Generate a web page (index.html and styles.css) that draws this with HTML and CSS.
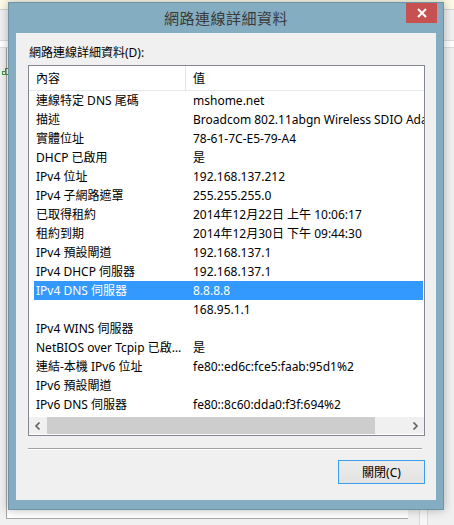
FILE: index.html
```html
<!DOCTYPE html>
<html lang="zh-Hant">
<head>
    <meta charset="UTF-8">
    <meta name="viewport" content="width=device-width, initial-scale=1.0">
    <title>網路連線詳細資料</title>
    <link rel="stylesheet" href="styles.css">
</head>
<body>
    <div class="desk">
        <div class="bg-top"></div>
        <div class="bg-toolbar"></div>
        <div class="bg-strip"></div>
        <div class="bg-main">
            <div class="bg-panel">
                <svg class="bg-icon" width="8" height="8" viewBox="0 0 8 8">
                    <rect x="0.5" y="4.5" width="3" height="3" fill="none" stroke="#3a9a3a"/>
                    <rect x="3.5" y="1.5" width="3" height="6" fill="none" stroke="#3a9a3a"/>
                </svg>
            </div>
            <div class="bg-side"></div>
        </div>
    </div>

    <div class="dialog">
        <div class="titlebar">
            <span class="title">網路連線詳細資料</span>
            <div class="close">
                <svg width="10" height="10" viewBox="0 0 10 10">
                    <path d="M1 1 L9 9 M9 1 L1 9" stroke="#fff" stroke-width="2" fill="none"/>
                </svg>
            </div>
        </div>

        <div class="client">
            <div class="caption">網路連線詳細資料(D):</div>

            <div class="listview">
                <div class="lv-head">
                    <div class="head-cell first">內容</div>
                    <div class="head-cell">值</div>
                </div>
                <div class="lv-body">
                    <div class="row"><div class="cell name">連線特定 DNS 尾碼</div><div class="cell">mshome.net</div></div>
                    <div class="row"><div class="cell name">描述</div><div class="cell">Broadcom 802.11abgn Wireless SDIO Adapter</div></div>
                    <div class="row"><div class="cell name">實體位址</div><div class="cell">78-61-7C-E5-79-A4</div></div>
                    <div class="row"><div class="cell name">DHCP 已啟用</div><div class="cell">是</div></div>
                    <div class="row"><div class="cell name">IPv4 位址</div><div class="cell">192.168.137.212</div></div>
                    <div class="row"><div class="cell name">IPv4 子網路遮罩</div><div class="cell">255.255.255.0</div></div>
                    <div class="row"><div class="cell name">已取得租約</div><div class="cell">2014年12月22日 上午 10:06:17</div></div>
                    <div class="row"><div class="cell name">租約到期</div><div class="cell">2014年12月30日 下午 09:44:30</div></div>
                    <div class="row"><div class="cell name">IPv4 預設閘道</div><div class="cell">192.168.137.1</div></div>
                    <div class="row"><div class="cell name">IPv4 DHCP 伺服器</div><div class="cell">192.168.137.1</div></div>
                    <div class="row selected"><div class="cell name">IPv4 DNS 伺服器</div><div class="cell">8.8.8.8</div></div>
                    <div class="row"><div class="cell name"></div><div class="cell">168.95.1.1</div></div>
                    <div class="row"><div class="cell name">IPv4 WINS 伺服器</div><div class="cell"></div></div>
                    <div class="row"><div class="cell name">NetBIOS over Tcpip 已啟用</div><div class="cell">是</div></div>
                    <div class="row"><div class="cell name">連結-本機 IPv6 位址</div><div class="cell">fe80::ed6c:fce5:faab:95d1%2</div></div>
                    <div class="row"><div class="cell name">IPv6 預設閘道</div><div class="cell"></div></div>
                    <div class="row"><div class="cell name">IPv6 DNS 伺服器</div><div class="cell">fe80::8c60:dda0:f3f:694%2</div></div>
                </div>
                <div class="hscroll">
                    <div class="arrow">
                        <svg width="8" height="8" viewBox="0 0 8 8"><path d="M5.5 0.5 L2 4 L5.5 7.5" stroke="#606060" stroke-width="1.6" fill="none"/></svg>
                    </div>
                    <div class="thumb"></div>
                    <div class="track"></div>
                    <div class="arrow">
                        <svg width="8" height="8" viewBox="0 0 8 8"><path d="M2.5 0.5 L6 4 L2.5 7.5" stroke="#606060" stroke-width="1.6" fill="none"/></svg>
                    </div>
                </div>
            </div>

            <div class="separator"></div>

            <div class="actions">
                <button class="btn">關閉(C)</button>
            </div>
        </div>
    </div>
</body>
</html>
```

FILE: styles.css
```css
body {
    margin: 0;
    width: 454px;
    height: 525px;
    overflow: hidden;
    background: #f0f0f0;
    font-family: "Noto Sans", "Noto Sans CJK TC", sans-serif;
    font-size: 12px;
    color: #000;
}

/* window behind the dialog */
.desk {
    display: flex;
    flex-direction: column;
    height: 525px;
}

.bg-top {
    height: 9px;
    background: #fcfae6; /* pale yellow info bar */
    border-bottom: 1px solid #d4d4d4;
}

.bg-toolbar {
    height: 30px;
    background: #f0f0f0;
}

.bg-strip {
    height: 6px;
    background: #fff;
    border-top: 1px solid #dcdcdc;
    border-bottom: 1px solid #dcdcdc;
}

.bg-main {
    display: flex;
    height: 477px;
}

.bg-panel {
    width: 401px;
    height: 470px;
    margin-left: 6px;
    background: #fff;
    border-left: 1px solid #a9a9a9;
    border-bottom: 1px solid #a9a9a9;
}

.bg-icon {
    display: block;
    margin: 19px 0 0 -5px;
}

.bg-side {
    width: 7px;
    margin-left: 11px;
    border-left: 1px solid #dadada;
    border-right: 1px solid #dadada;
    background: #f7f7f7;
}

/* the dialog window */
.dialog {
    position: absolute;
    left: 8px;
    top: 2px;
    width: 436px;
    height: 508px;
    box-sizing: border-box;
    display: flex;
    flex-direction: column;
    padding: 0 7px 9px 7px;
    background: #85adc1; /* window frame */
    border: 1px solid #6d93a6;
    box-shadow: 0 0 9px rgba(0, 0, 0, 0.28);
}

.titlebar {
    height: 30px;
    margin: 0 -7px;
    position: relative;
    display: flex;
    justify-content: center;
}

.title {
    font-family: "Noto Sans CJK TC", sans-serif;
    font-size: 15px;
    line-height: 30px;
    color: #3a3a3a;
    letter-spacing: 0.5px;
}

.close {
    position: absolute;
    top: 0;
    right: 6px;
    width: 31px;
    height: 20px;
    background: #c75050;
    display: flex;
    align-items: center;
    justify-content: center;
}

.client {
    flex: 1;
    background: #f0f0f0;
    display: flex;
    flex-direction: column;
}

.caption {
    padding: 12px 0 0 13px;
    line-height: 16px;
}

/* list view */
.listview {
    margin: 4px 0 0 12px;
    width: 397px;
    height: 371px;
    box-sizing: border-box;
    border: 1px solid #828790;
    background: #fff;
    display: flex;
    flex-direction: column;
}

.lv-head {
    display: flex;
    height: 24px;
    border-bottom: 1px solid #e2e8ee;
}

.head-cell {
    padding: 2px 0 0 7px;
    line-height: 22px;
}

.head-cell.first {
    width: 149px;
    border-right: 1px solid #e5e5e5;
}

.lv-body {
    height: 323px;
    overflow: hidden;
}

.row {
    display: flex;
    width: 389px;
    margin-left: 5px;
    height: 19px;
    line-height: 19px;
    white-space: nowrap;
}

.row.selected {
    background: #3399ff;
    color: #fff;
}

.cell {
    padding-left: 2px;
}

.cell.name {
    width: 147px;
    padding-right: 8px;
    overflow: hidden;
    text-overflow: ellipsis;
    flex-shrink: 0;
}

.hscroll {
    display: flex;
    height: 17px;
    margin: 3px 0 1px 0;
    background: #f0f0f0;
}

.arrow {
    width: 18px;
    display: flex;
    align-items: center;
    justify-content: center;
}

.thumb {
    width: 328px;
    background: #cdcdcd;
}

.track {
    flex: 1;
}

.separator {
    margin: 12px 0 0 12px;
    width: 394px;
    border-top: 1px solid #a0a0a0;
    border-bottom: 1px solid #fff;
}

.actions {
    display: flex;
    justify-content: flex-end;
    padding: 10px 11px 0 0;
}

.btn {
    width: 87px;
    height: 24px;
    font-family: inherit;
    font-size: 12px;
    color: #000;
    background: linear-gradient(#ececec, #e3e3e3);
    border: 1px solid #3c9cf0; /* default button focus */
    padding: 0;
}
```
